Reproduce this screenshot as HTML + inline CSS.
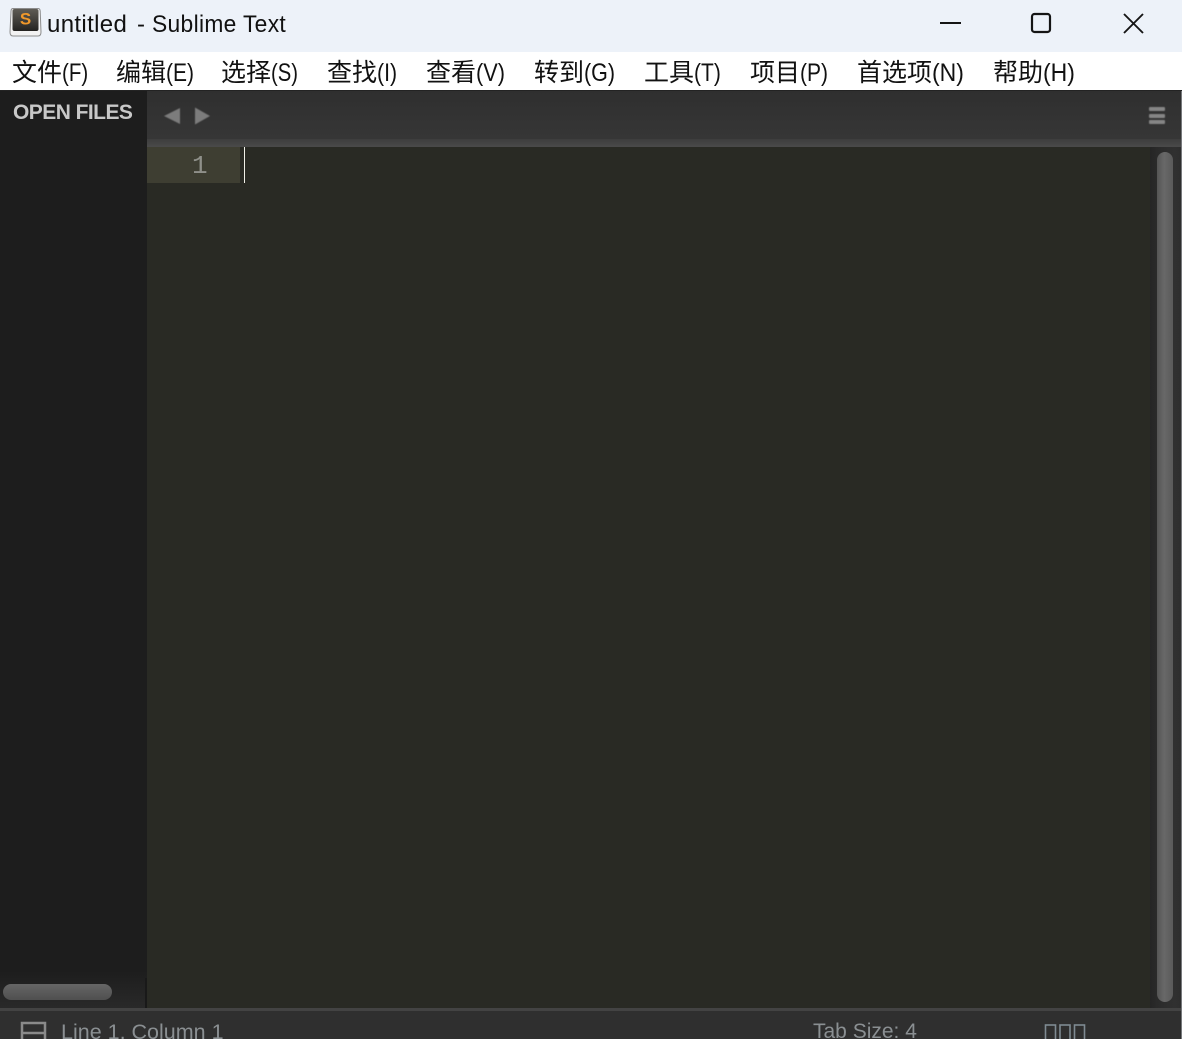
<!DOCTYPE html>
<html lang="zh">
<head>
<meta charset="utf-8">
<style>
html,body{margin:0;padding:0;background:#232323}
#a{position:relative;width:1182px;height:1039px;overflow:hidden;font-family:"Liberation Sans","Noto Sans CJK SC",sans-serif}
#a div{position:absolute;white-space:nowrap}
.m{top:56px;font-size:25px;line-height:34px;color:#111}
.m span{display:inline-block;transform-origin:0 50%;font-size:25px}
.s{top:1020px;line-height:24px;color:#8a8f92}
.w{top:10px;font-size:24px;line-height:30px;color:#111;letter-spacing:.35px;transform-origin:0 50%}
.h{left:1149px;width:16px;height:4px;background:#858585;border-radius:1px;filter:blur(.4px)}
</style>
</head>
<body>
<div id="a">
<div style="left:0;top:0;width:1182px;height:52px;background:#edf2f9"></div>
<div style="left:0;top:52px;width:1182px;height:38px;background:#fff"></div>
<svg style="position:absolute;left:9px;top:6px" width="34" height="32" viewBox="0 0 34 32">
<defs><linearGradient id="k" x1="0" y1="0" x2="0" y2="1"><stop offset="0" stop-color="#5f5c55"/><stop offset=".6" stop-color="#3c3a36"/><stop offset="1" stop-color="#232220"/></linearGradient></defs>
<path d="M4 2.500H29Q31 2.500 31.200 5L32 26Q32 30 29 30H4Q1 30 1 26L2 5Q2.200 2.500 4 2.500Z" fill="#f2f2f2" stroke="#8c8c8c"/>
<rect x="3.500" y="3" width="26" height="22" rx="2" fill="url(#k)"/>
<text x="16.500" y="18.500" text-anchor="middle" font-family="Liberation Sans" font-size="17" font-weight="bold" fill="#f0982a">S</text>
</svg>
<div class="w" style="left:47px">untitled</div>
<div class="w" style="left:137px">-</div>
<div class="w" style="left:152px;transform:scaleX(.95)">Sublime Text</div>
<svg style="position:absolute;left:930px;top:5px" width="220" height="36" viewBox="930 5 220 36" fill="none" stroke="#151515" stroke-width="2">
<path d="M940 23H961"/>
<rect x="1032" y="14" width="18" height="18" rx="2.500" stroke-width="2.200"/>
<path d="M1124 14L1143 33M1143 14L1124 33" stroke-width="1.900"/>
</svg>
<div class="m" style="left:12px">文件<span style="transform:scaleX(.82)">(F)</span></div>
<div class="m" style="left:116px">编辑<span style="transform:scaleX(.84)">(E)</span></div>
<div class="m" style="left:221px">选择<span style="transform:scaleX(.81)">(S)</span></div>
<div class="m" style="left:327px">查找<span style="transform:scaleX(.85)">(I)</span></div>
<div class="m" style="left:426px">查看<span style="transform:scaleX(.87)">(V)</span></div>
<div class="m" style="left:534px">转到<span style="transform:scaleX(.86)">(G)</span></div>
<div class="m" style="left:644px">工具<span style="transform:scaleX(.84)">(T)</span></div>
<div class="m" style="left:750px">项目<span style="transform:scaleX(.84)">(P)</span></div>
<div class="m" style="left:857px">首选项<span style="transform:scaleX(.92)">(N)</span></div>
<div class="m" style="left:993px">帮助<span style="transform:scaleX(.92)">(H)</span></div>

<div style="left:0;top:91px;width:147px;height:919px;background:linear-gradient(#1d1d1d 0,#1d1d1d 880px,#2a2a2a 919px)"></div>
<div style="left:13px;top:99px;font-size:21px;line-height:28px;font-weight:bold;color:#c8c8c8;letter-spacing:-.55px">OPEN FILES</div>
<div style="left:3px;top:984px;width:109px;height:16px;border-radius:8px;background:linear-gradient(#666,#4f4f4f)"></div>

<div style="left:147px;top:91px;width:1035px;height:48px;background:linear-gradient(#2f2f2f,#363636)"></div>
<div style="left:147px;top:139px;width:1035px;height:8px;background:linear-gradient(#3d3d3d,#4a4a4a)"></div>
<svg style="position:absolute;left:160px;top:105px;filter:blur(.4px)" width="54" height="22" viewBox="0 0 54 22" fill="#7c7c7c">
<path d="M4 11L20 3V19Z"/><path d="M35 2.500L50 11L35 19.500Z"/>
</svg>
<div class="h" style="top:107px"></div>
<div class="h" style="top:113.500px"></div>
<div class="h" style="top:120px"></div>

<div style="left:147px;top:147px;width:1003px;height:861px;background:#292a24"></div>
<div style="left:147px;top:147px;width:93px;height:36px;background:#3e3e32"></div>
<div style="left:192px;top:150px;font-family:'Liberation Mono',monospace;font-size:26px;line-height:32px;color:#8f908a">1</div>
<div style="left:244px;top:147px;width:1px;height:36px;background:#f0f0e8"></div>

<div style="left:1150px;top:147px;width:31px;height:861px;background:linear-gradient(90deg,#252525,#2a2a2a 7px,#303030 24px,#2e2e2e)"></div>
<div style="left:1157px;top:152px;width:16px;height:850px;border-radius:8px;background:linear-gradient(90deg,#555,#686868 45%,#5a5a5a)"></div>

<div style="left:145px;top:978px;width:2px;height:30px;background:#191919"></div>
<div style="left:0;top:1008px;width:1182px;height:31px;background:#2f2f2f"></div>
<div style="left:0;top:1008px;width:1182px;height:3px;background:#434343"></div>
<div style="left:1181px;top:91px;width:1px;height:948px;background:#77797c"></div>
<svg style="position:absolute;left:20px;top:1020px" width="27" height="19" viewBox="0 0 27 19" fill="none" stroke="#8a8a8a" stroke-width="2.500">
<path d="M2 19V3H25V19M2 13H25"/>
</svg>
<div class="s" style="left:61px;font-size:21.500px">Line 1, Column 1</div>
<div class="s" style="left:813px;font-size:21px">Tab Size: 4</div>
<svg style="position:absolute;left:1044px;top:1024px" width="42" height="15" viewBox="0 0 42 15" fill="none" stroke="#7f8a92" stroke-width="1.600">
<rect x="1.500" y="1" width="10" height="15"/><rect x="16" y="1" width="10" height="15"/><rect x="30.500" y="1" width="10" height="15"/>
</svg>
</div>
</body>
</html>
